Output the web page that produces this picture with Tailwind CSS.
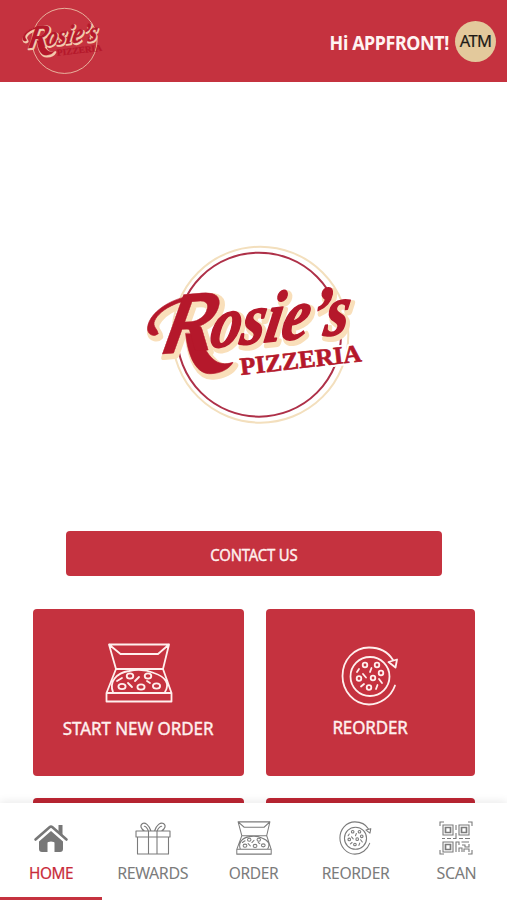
<!DOCTYPE html>
<html lang="en">
<head>
<meta charset="utf-8">
<title>Rosie's Pizzeria</title>
<script src="https://cdn.jsdelivr.net/npm/@tailwindcss/browser@4"></script>
</head>
<body class="bg-white font-['Noto_Sans',sans-serif]">
<svg class="hidden">
  <symbol id="logo" viewBox="0 0 720 600">
    <circle cx="376" cy="299" r="264" fill="none" stroke="#f3dfbd" stroke-width="6"/>
    <circle cx="372" cy="299" r="246" fill="none" style="stroke:var(--ring)" stroke-width="6"/>
    <g font-family="Liberation Serif, serif" font-weight="bold" font-style="italic">
      <g style="fill:var(--halo);stroke:var(--halo)" stroke-width="18" stroke-linejoin="round" stroke-linecap="round" transform="translate(7 9)">
        <path d="M69 296C61 305 42 303 38 286C32 239 111 177 211 179L206 192C119 189 55 240 57 268C58 280 69 284 69 296ZM152 296C159 366 185 420 229 416C258 415 285 400 294 382C246 398 217 369 190 296Z"/>
        <text transform="translate(72 358) rotate(-5) skewX(-18)" font-family="Lato, sans-serif" font-weight="bold" font-size="238" textLength="158" lengthAdjust="spacingAndGlyphs" aria-hidden="true">R</text>
        <text transform="translate(220 339) rotate(-6) skewX(-16)" font-size="214" textLength="416" lengthAdjust="spacingAndGlyphs" aria-hidden="true">osie’s</text>
      </g>
      <g fill="#b5182b" stroke="#b5182b" stroke-linejoin="round" stroke-linecap="round">
        <path d="M69 296C61 305 42 303 38 286C32 239 111 177 211 179L206 192C119 189 55 240 57 268C58 280 69 284 69 296ZM152 296C159 366 185 420 229 416C258 415 285 400 294 382C246 398 217 369 190 296Z" stroke-width="2"/>
        <text transform="translate(72 358) rotate(-5) skewX(-18)" font-family="Lato, sans-serif" font-weight="bold" font-size="238" textLength="158" lengthAdjust="spacingAndGlyphs" stroke-width="1">R</text>
        <text transform="translate(220 339) rotate(-6) skewX(-16)" font-size="214" textLength="416" lengthAdjust="spacingAndGlyphs" stroke-width="5">osie’s</text>
      </g>
    </g>
    <text transform="rotate(-6.5 318 420)" x="318" y="420" font-family="Liberation Serif, serif" font-weight="bold" font-size="74" textLength="366" lengthAdjust="spacingAndGlyphs" fill="none" style="stroke:var(--edge)" stroke-width="14" stroke-linejoin="round" aria-hidden="true">PIZZERIA</text>
    <text transform="rotate(-6.5 318 420)" x="318" y="420" font-family="Liberation Serif, serif" font-weight="bold" font-size="74" textLength="366" lengthAdjust="spacingAndGlyphs" fill="#b5182b" stroke="#b5182b" stroke-width="2">PIZZERIA</text>
  </symbol>
  <symbol id="box" viewBox="0 0 68 60">
    <g fill="none" stroke="currentColor" stroke-linejoin="round" stroke-linecap="round">
      <path d="M4 1.500H64L58 26H11ZM4 1.500L15.500 11H53L64 1.500M11 26L1.500 50V58.500H66.500V50L58 26M1.500 50H66.500M8 49C4 39 11 30 24 28C33 26 42 27 49 30C61 34 65 41 60 49"/>
      <ellipse cx="25" cy="33" rx="3.300" ry="2.600"/><ellipse cx="43" cy="33" rx="3.300" ry="2.600"/><ellipse cx="17" cy="43.500" rx="3.600" ry="2.700"/><ellipse cx="36" cy="44" rx="3.600" ry="2.700"/><ellipse cx="51.500" cy="43" rx="3.600" ry="2.700"/>
      <path d="M12 38L17 35M30 38L34 34M23 40L27 44M42 38L45 40"/>
    </g>
  </symbol>
  <symbol id="again" viewBox="0 0 58 60">
    <g fill="none" stroke="currentColor" stroke-linejoin="round" stroke-linecap="round">
      <path d="M54 39.500C50 51 39 58.500 28 58.500C13 58.500 1.500 45 1.500 30C1.500 14 13 1.500 28 1.500C39 1.500 47 6 52 14M47.500 16L56 13.500L54.500 21.500Z"/>
      <circle cx="29" cy="30.500" r="19.500"/>
      <circle cx="24" cy="19" r="2.300"/><circle cx="36" cy="19" r="2.300"/><circle cx="40" cy="27" r="2.300"/><circle cx="18" cy="32.500" r="2.300"/><circle cx="32" cy="32" r="2.300"/><circle cx="28" cy="41.500" r="2.300"/>
      <path d="M16 26L18 23M29 26L30.500 22M22 28L25 31.500M38 33L41 37M20 40.500L23 38M35 43L36.500 39"/>
    </g>
  </symbol>
</svg>
<div class="relative flex h-[900px] w-[507px] flex-col overflow-hidden">
  <header class="flex h-[82px] shrink-0 items-center bg-[#c5323f] pl-[18px] pr-[11px]">
    <svg class="h-[74px] w-[89px] [--edge:transparent] [--halo:#f3c9ad] [--ring:transparent]"><use href="#logo"/></svg>
    <div class="ml-auto flex items-center gap-[6px]">
      <span class="mt-[4px] origin-right scale-x-[0.94] whitespace-nowrap text-[19px] font-bold leading-6 tracking-[-0.400px] text-[#fff4f2]">Hi APPFRONT!</span>
      <span class="flex size-[41px] items-center justify-center rounded-full bg-[#e3c99c] pt-px text-[16.500px] tracking-[-0.6px] text-[#1d1a16] [-webkit-text-stroke:0.2px_#1d1a16]">ATM</span>
    </div>
  </header>
  <main class="flex flex-1 flex-col">
    <div class="flex h-[449px] shrink-0 pl-[135px] pt-[153px]">
      <svg class="h-[200px] w-[240px] [--edge:white] [--halo:#f9dfba] [--ring:#ae3048]"><use href="#logo"/></svg>
    </div>
    <button class="ml-[66px] h-[45px] w-[376px] shrink-0 rounded-[4px] bg-[#c5323f] pt-[2px] text-[16px] tracking-[-0.200px] text-[#fff0ee] [-webkit-text-stroke:0.4px_#fff0ee]"><span class="inline-block scale-x-[0.93]">CONTACT US</span></button>
    <div class="mt-[33px] grid shrink-0 grid-cols-[211px_209px] gap-x-[22px] gap-y-[22px] pl-[33px] text-[#fff0ee]">
      <div class="flex h-[167px] flex-col items-center rounded-[4px] bg-[#c5323f] pt-[34px]">
        <svg class="h-[60px] w-[68px]" stroke-width="1.8"><use href="#box"/></svg>
        <span class="mt-[13px] scale-x-[0.94] whitespace-nowrap text-[18px] leading-6 tracking-[-0.030px] [-webkit-text-stroke:0.4px_#fff0ee]">START NEW ORDER</span>
      </div>
      <div class="flex h-[167px] flex-col items-center rounded-[4px] bg-[#c5323f] pt-[37px]">
        <svg class="ml-[-1px] h-[60px] w-[58px]" stroke-width="1.8"><use href="#again"/></svg>
        <span class="mt-[9px] scale-x-[0.94] whitespace-nowrap text-[18px] leading-6 tracking-[-0.100px] [-webkit-text-stroke:0.4px_#fff0ee]">REORDER</span>
      </div>
      <div class="h-[167px] rounded-[4px] bg-[#bd2533]"></div>
      <div class="h-[167px] rounded-[4px] bg-[#bd2533]"></div>
    </div>
  </main>
  <nav class="absolute inset-x-0 bottom-0 grid h-[97px] grid-cols-[102px_repeat(4,1fr)] bg-white text-[16px] leading-6 tracking-[-0.4px] text-[#7b7b7b] shadow-[0_-2px_8px_rgba(0,0,0,0.08)]">
    <a class="flex flex-col items-center border-b-[3px] border-[#c5323f] pt-[18px] text-[#c92b3a]">
      <svg class="h-[34px] w-[36px] text-[#777]" viewBox="0 0 36 34" fill="currentColor"><path d="M18 10L30 20.500V28Q30 31 27 31H21.500V22Q21.500 20.500 18 20.500Q14.500 20.500 14.500 22V31H9Q6 31 6 28V20.500Z"/><path d="M2.500 18.500L16.500 6.200Q18 5 19.500 6.200L33.500 18.500" fill="none" stroke="currentColor" stroke-width="2.600" stroke-linecap="round"/><path d="M25.500 4H29.500V14L25.500 10.500Z"/></svg>
      <span class="mt-[6px] scale-x-[0.96] [-webkit-text-stroke:0.2px_#c92b3a]">HOME</span>
    </a>
    <a class="flex flex-col items-center pt-[18px]">
      <svg class="h-[34px] w-[36px]" viewBox="0 0 36 34" fill="none" stroke="currentColor" stroke-width="1.100" stroke-linejoin="round"><path d="M1 10H35V16H1ZM2.500 16H33.500V33H2.500ZM13.500 10V33M22 10V33M16 10C14 4 10 1 7.500 2.500C4.500 4.500 6 8 9.500 10M13.500 10C12 6.500 10 4.500 9 5.500M19.500 10C21.500 4 25.500 1 28.500 2.500C31.500 4.500 30 8 26.500 10M22 10C23.500 6.500 26 4.500 27 5.500M16 10H20"/></svg>
      <span class="mt-[6px]">REWARDS</span>
    </a>
    <a class="flex flex-col items-center pt-[18px]">
      <svg class="h-[34px] w-[36px]" viewBox="0 0 68 60" preserveAspectRatio="none" stroke-width="1.900"><use href="#box" width="68" height="60"/></svg>
      <span class="mt-[6px] scale-x-[0.97]">ORDER</span>
    </a>
    <a class="flex flex-col items-center pt-[18px]">
      <svg class="h-[34px] w-[33px]" viewBox="0 0 58 60" stroke-width="1.900"><use href="#again" width="58" height="60"/></svg>
      <span class="mt-[6px] scale-x-[0.98]">REORDER</span>
    </a>
    <a class="flex flex-col items-center pt-[18px]">
      <svg class="h-[34px] w-[34px]" viewBox="0 0 34 34" fill="none" stroke="currentColor" stroke-width="1.100"><path d="M1 5V1H5M29 1H33V5M33 29V33H29M5 33H1V29M4 4H14V14H4ZM20 4H30V14H20ZM4 21H14V31H4ZM3 17.500H6M8 17.500H12M14 17.500H17V12M17 4V9M20 17.500H24M26 17.500H31M17 31V21H20V24M22.500 21H30M20 31V27H23V31M25 31V28H30V31M23 24H26V26H30V23"/><path d="M6.500 6.500H11.500V11.500H6.500ZM22.500 6.500H27.500V11.500H22.500ZM6.500 23.500H11.500V28.500H6.500Z" stroke-width="1.700"/></svg>
      <span class="mt-[6px]">SCAN</span>
    </a>
  </nav>
</div>
</body>
</html>
